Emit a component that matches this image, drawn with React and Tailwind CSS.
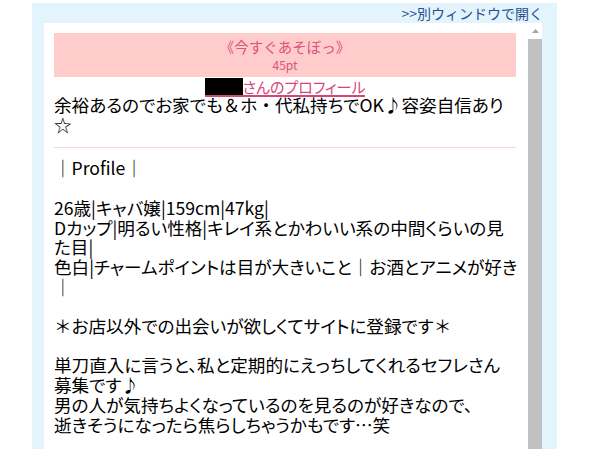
export default function App() {
  const jp = "font-['Noto_Sans_CJK_JP','Noto_Sans',sans-serif]";
  const nopalt = "[font-feature-settings:normal]";
  return (
    <div className={`w-[602px] h-[476px] bg-white overflow-hidden ${jp}`}>
      <div className="ml-[32px] mt-[3px] w-[525px] h-[446px] bg-[#e3f4fd] flex flex-col">
        <div className="h-[20px] flex items-center justify-end pr-[14px] text-[14px] leading-none text-[#27508f]">
          &gt;&gt;別ウィンドウで開く
        </div>
        <div className="ml-[12px] mr-[15px] flex-1 min-h-0 bg-white flex">
          <div className="flex-1 min-w-0 overflow-hidden pl-[10px] pr-[12px] pt-[10px]">
            <div className="bg-[#ffcccc] h-[44px] flex flex-col items-center justify-center text-[#e0507c]">
              <div className="text-[14.5px] leading-[20px]">《今すぐあそぼっ》</div>
              <div className="text-[12px] leading-[16px]">45pt</div>
            </div>
            <div className="flex justify-center h-[20px] items-end [font-feature-settings:'palt']">
              <span className="inline-flex items-end border-b-2 border-[#d6457a] text-[15px] leading-[17px] text-[#d6457a]">
                <span className="inline-block w-[38px] h-[17px] bg-black" />
                さんのプロフィール
              </span>
            </div>
            <div className="text-[17.6px] leading-[19.7px] text-black whitespace-nowrap mt-[-2px] [font-feature-settings:'palt']">
              <div>
                余裕あるのでお家でも<span className={nopalt}>＆</span>ホ<span className={nopalt}>・</span>代私持ちでOK♪容姿自信あり
              </div>
              <div>☆</div>
              <div className="border-t border-[#f2d6de] mt-[13px] mb-[10px]" />
              <div>｜Profile｜</div>
              <div className="h-[19.7px]" />
              <div>26歳|キャバ嬢|159cm|47kg|</div>
              <div>Dカップ|明るい性格|キレイ系とかわいい系の中間くらいの見</div>
              <div>た目|</div>
              <div>色白|チャームポイントは目が大きいこと｜お酒とアニメが好き</div>
              <div>｜</div>
              <div className="h-[19.7px]" />
              <div>
                <span className={nopalt}>＊</span>お店以外での出会いが欲しくてサイトに登録です<span className={nopalt}>＊</span>
              </div>
              <div className="h-[19.7px]" />
              <div>単刀直入に言うと、私と定期的にえっちしてくれるセフレさん</div>
              <div>募集です♪</div>
              <div>男の人が気持ちよくなっているのを見るのが好きなので、</div>
              <div>逝きそうになったら焦らしちゃうかもです…笑</div>
            </div>
          </div>
          <div className="w-[14px] flex flex-col">
            <div className="h-[16px] flex items-center justify-center">
              <svg width="7" height="4" viewBox="0 0 7 4">
                <polygon points="3.5,0 7,4 0,4" fill="#a3a3a3" />
              </svg>
            </div>
            <div className="flex-1 bg-[#c1c1c1]" />
          </div>
        </div>
      </div>
    </div>
  );
}
